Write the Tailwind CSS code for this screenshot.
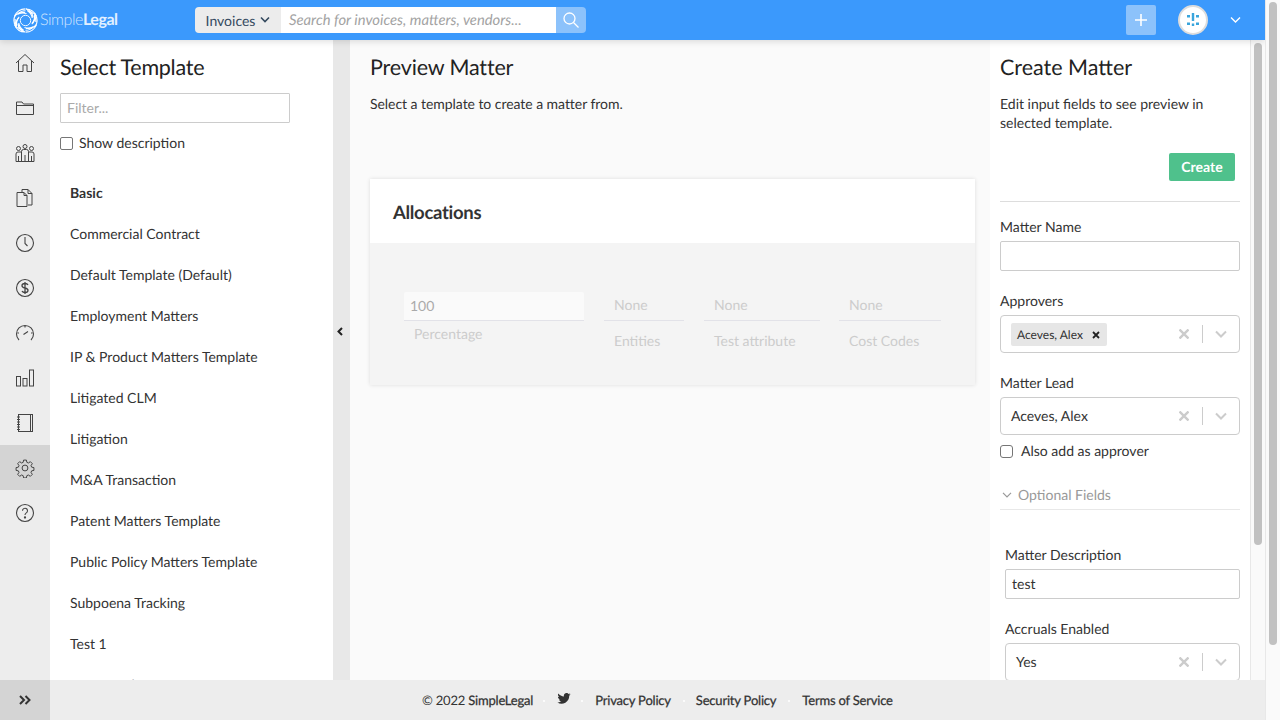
<!DOCTYPE html>
<html>
<head>
  <meta charset="UTF-8">
  <title>SimpleLegal</title>
  <script src="https://cdn.jsdelivr.net/npm/@tailwindcss/browser@4"></script>
</head>
<body class="h-[720px] w-[1280px] overflow-hidden bg-white font-['Lato','Liberation_Sans',sans-serif] text-[14px] text-[#333] [text-rendering:geometricPrecision]">
  <!-- top bar -->
  <header class="relative z-10 flex h-[40px] w-[1265px] items-center bg-[#3b99fc] shadow-[0_2px_6px_rgba(0,0,0,0.12)]">
    <div class="flex w-[195px] items-center pl-[13px]">
      <svg class="h-[25px] w-[25px]" viewBox="0 0 24 24" fill="none" stroke="#fff" stroke-width="1.1">
        <path d="M12 .8C7 .8 3 4 1.500 8c3-3.500 7-4 10-3.500"/>
        <path d="M12 2.600c-3.500 0-6 1.600-7.500 3.400 3-1.400 6-1.500 8.500-.7"/>
        <path d="M22.500 8c-1.500-3.500-5-7-10-7 4 1.500 6.500 5 6.700 8"/>
        <path d="M19.800 5.500c-1.700-1.600-3.800-2.700-6-2.800 2.600 1.500 4.200 4 4.700 6.800"/>
        <path d="M21.700 17.500c2-4 1.500-9-1-12.500 1 4.500-.5 8.500-2.700 10.500"/>
        <path d="M22 13.500c.2-2.400-.3-4.700-1.500-6.500.4 3-.5 6-2.200 7.500"/>
        <path d="M12 23.200c5 0 9-3.200 10.500-7.200-3 3.500-7 4-10 3.500"/>
        <path d="M12 21.400c3.500 0 6-1.600 7.500-3.400-3 1.400-6 1.500-8.500.7"/>
        <path d="M1.500 16c1.500 3.500 5 7 10 7-4-1.500-6.500-5-6.700-8"/>
        <path d="M4.200 18.500c1.700 1.600 3.800 2.700 6 2.800-2.600-1.500-4.200-4-4.700-6.800"/>
        <path d="M2.300 6.500c-2 4-1.500 9 1 12.500-1-4.500.5-8.500 2.700-10.500"/>
        <path d="M2 10.500c-.2 2.400.3 4.700 1.500 6.500-.4-3 .5-6 2.200-7.500"/>
        <circle cx="12" cy="12" r="5" stroke-width=".9"/>
      </svg>
      <span class="ml-[2px] text-[16px] leading-none font-light tracking-[-0.45px] text-white/75">Simple<span class="font-bold text-white/85">Legal</span></span>
    </div>
    <div class="flex h-[26px] w-[391px] items-stretch">
      <div class="flex w-[86px] items-center justify-center gap-[5px] rounded-l-[4px] bg-[#ececec] text-[14px] text-[#34495e]">
        Invoices
        <svg class="h-[8px] w-[10px]" viewBox="0 0 10 8" fill="none" stroke="#34495e" stroke-width="1.6"><path d="M1 1.500l4 4 4-4"/></svg>
      </div>
      <div class="flex w-[275px] items-center bg-white pl-[8px] text-[14.800px] italic text-[#a3a3a3]">Search for invoices, matters, vendors...</div>
      <div class="flex w-[30px] items-center justify-center rounded-r-[4px] bg-[#8cc2fb]">
        <svg class="h-[18px] w-[18px]" viewBox="0 0 18 18" fill="none" stroke="#fff" stroke-width="1.3"><circle cx="7.500" cy="7.500" r="5.500"/><path d="M11.500 11.500l5 5"/></svg>
      </div>
    </div>
    <div class="ml-auto flex items-center">
      <div class="flex h-[30px] w-[30px] items-center justify-center rounded-[2px] bg-[#8cc2fb]">
        <svg class="h-[14px] w-[14px]" viewBox="0 0 14 14" stroke="#fff" stroke-width="1.600"><path d="M7 1v12M1 7h12"/></svg>
      </div>
      <div class="ml-[22px] flex h-[30px] w-[30px] items-center justify-center rounded-full border-2 border-[#ddd] bg-white">
        <svg class="h-[16px] w-[16px]" viewBox="0 0 16 16" fill="#3aa5dc"><rect x="6.800" y="1" width="2.400" height="8"/><rect x="2" y="3" width="3" height="2.500"/><rect x="11" y="3" width="3" height="2.500"/><rect x="2" y="10.500" width="3" height="2.500"/><rect x="11" y="10.500" width="3" height="2.500"/><rect x="6.800" y="11.500" width="2.400" height="2.500"/></svg>
      </div>
      <svg class="ml-[22px] mr-[24px] h-[8px] w-[11px]" viewBox="0 0 11 8" fill="none" stroke="#fff" stroke-width="1.400"><path d="M1 1.500l4.500 4.500 4.500-4.500"/></svg>
    </div>
  </header>

  <!-- outer scrollbar -->
  <div class="absolute right-0 top-0 z-20 h-[720px] w-[15px] border-l border-[#e8e8e8] bg-[#fafafa]">
    <div class="ml-[3px] mt-[2px] h-[643px] w-[8px] rounded-full bg-[#c1c1c1]"></div>
  </div>

  <div class="flex h-[640px] w-[1265px]">
    <!-- left rail -->
    <nav class="flex w-[50px] flex-none flex-col bg-[#ededed]">
      <div class="flex h-[45px] items-center justify-center">
        <svg class="h-[20px] w-[20px]" viewBox="0 0 20 20" fill="none" stroke="#444" stroke-width="1"><path d="M1 10l9-8.500 9 8.500M3.500 8v10.500h4.500v-6.500h4v6.500h4.500V8"/></svg>
      </div>
      <div class="flex h-[45px] items-center justify-center">
        <svg class="h-[20px] w-[20px]" viewBox="0 0 20 20" fill="none" stroke="#444" stroke-width="1"><path d="M1.500 4h5.500l1.500 2h10v10.500h-17zM1.500 7.500h17"/></svg>
      </div>
      <div class="flex h-[45px] items-center justify-center">
        <svg class="h-[20px] w-[20px]" viewBox="0 0 20 20" fill="none" stroke="#444" stroke-width="1"><circle cx="3.500" cy="5.500" r="2"/><circle cx="10" cy="3.500" r="2"/><circle cx="16.500" cy="5.500" r="2"/><path d="M6.500 18.500v-10a2 2 0 0 1 2-2h3a2 2 0 0 1 2 2v10M6.500 9h-3.500a2 2 0 0 0-2 2v7.500h18V11a2 2 0 0 0-2-2h-3.500M10 12v6.500M3.500 13v5.500M16.500 13v5.500"/></svg>
      </div>
      <div class="flex h-[45px] items-center justify-center">
        <svg class="h-[20px] w-[20px]" viewBox="0 0 20 20" fill="none" stroke="#444" stroke-width="1"><path d="M7 4.500V1.500h6l4 4v11.500h-4M13 1.500v4h4M2 4.500h7l3 3v11h-10zM9 4.500v3h3"/></svg>
      </div>
      <div class="flex h-[45px] items-center justify-center">
        <svg class="h-[20px] w-[20px]" viewBox="0 0 20 20" fill="none" stroke="#444" stroke-width="1.100"><circle cx="10" cy="10" r="8.500"/><path d="M10 4v6.500l2.500 2.500"/></svg>
      </div>
      <div class="flex h-[45px] items-center justify-center">
        <svg class="h-[20px] w-[20px]" viewBox="0 0 20 20" fill="none" stroke="#444" stroke-width="1.100"><circle cx="10" cy="10" r="8.500"/><path d="M13 7c-.5-1-1.500-1.500-3-1.500-2 0-3 1-3 2.200 0 3 6 1.600 6 4.600 0 1.200-1 2.200-3 2.200-1.500 0-2.500-.5-3-1.500M10 4v12" stroke-width="1.300"/></svg>
      </div>
      <div class="flex h-[45px] items-center justify-center">
        <svg class="h-[20px] w-[20px]" viewBox="0 0 20 20" fill="none" stroke="#444" stroke-width="1.100"><path d="M4 17a8.500 8.500 0 1 1 12 0M10 3v1.500M2.500 10H4M16 10h1.500M8.500 11.500l4.500-3"/></svg>
      </div>
      <div class="flex h-[45px] items-center justify-center">
        <svg class="h-[20px] w-[20px]" viewBox="0 0 20 20" fill="none" stroke="#444" stroke-width="1"><rect x="1.500" y="8.500" width="4" height="9.500"/><rect x="8" y="10.500" width="4" height="7.500"/><rect x="14.500" y="2" width="4" height="16"/></svg>
      </div>
      <div class="flex h-[45px] items-center justify-center">
        <svg class="h-[20px] w-[20px]" viewBox="0 0 20 20" fill="none" stroke="#444" stroke-width="1"><rect x="3.500" y="1.500" width="14" height="17"/><path d="M15.500 1.500v17M2 4h3M2 6.500h3M2 9h3M2 11.500h3M2 14h3M2 16.500h3"/></svg>
      </div>
      <div class="flex h-[45px] w-[50px] items-center justify-center bg-[#d4d4d4]">
        <svg class="h-[20px] w-[20px]" viewBox="0 0 24 24" fill="none" stroke="#444" stroke-width="1.200"><path d="M10.300 2.500h3.400l.5 2.700 1.900.8 2.300-1.600 2.400 2.400-1.600 2.300.8 1.900 2.700.5v3.400l-2.700.5-.8 1.900 1.600 2.300-2.400 2.400-2.300-1.600-1.900.8-.5 2.700h-3.400l-.5-2.700-1.900-.8-2.300 1.600-2.400-2.400 1.600-2.300-.8-1.900-2.700-.5v-3.400l2.700-.5.8-1.900-1.600-2.300 2.400-2.400 2.300 1.600 1.900-.8z"/><circle cx="12" cy="12" r="3.500"/></svg>
      </div>
      <div class="flex h-[45px] items-center justify-center">
        <svg class="h-[20px] w-[20px]" viewBox="0 0 20 20" fill="none" stroke="#444" stroke-width="1.100"><circle cx="10" cy="10" r="8.500"/><path d="M7.500 7.800a2.500 2.500 0 1 1 3.800 2.100c-.9.600-1.300 1-1.300 2.100"/><circle cx="10" cy="14.500" r=".6" fill="#444"/></svg>
      </div>
    </nav>

    <!-- template list -->
    <aside class="h-[640px] w-[283px] flex-none overflow-hidden bg-white pl-[10px]">
      <h2 class="mt-[14px] text-[21.500px] leading-[27px] tracking-[-0.25px] text-[#222]">Select Template</h2>
      <input class="mt-[12px] block h-[30px] w-[230px] rounded-[1px] border border-[#ccc] px-[6px] pb-[2px] text-[14px] placeholder:text-[#aaa]" placeholder="Filter...">
      <label class="mt-[11px] flex items-center text-[14px] leading-[18px]"><span class="h-[13px] w-[13px] rounded-[2px] border border-[#767676] bg-white"></span><span class="ml-[6px]">Show description</span></label>
      <ul class="mt-[20px] pl-[10px] leading-[41px]">
        <li class="font-bold">Basic</li>
        <li>Commercial Contract</li>
        <li>Default Template (Default)</li>
        <li>Employment Matters</li>
        <li>IP &amp; Product Matters Template</li>
        <li>Litigated CLM</li>
        <li>Litigation</li>
        <li>M&amp;A Transaction</li>
        <li>Patent Matters Template</li>
        <li>Public Policy Matters Template</li>
        <li>Subpoena Tracking</li>
        <li>Test 1</li>
        <li>Test Template</li>
      </ul>
    </aside>

    <!-- collapse strip -->
    <div class="flex w-[17px] flex-none items-center justify-center bg-[#e8e8e8] pb-[58px]">
      <svg class="-ml-[3px] h-[9px] w-[6px]" viewBox="0 0 6 9" fill="none" stroke="#222" stroke-width="2"><path d="M5 1l-3.500 3.500 3.500 3.500"/></svg>
    </div>

    <!-- preview -->
    <main class="w-[640px] flex-none bg-[#fafafa] pl-[20px]">
      <h2 class="mt-[14px] text-[21.500px] leading-[27px] tracking-[-0.15px] text-[#222]">Preview Matter</h2>
      <p class="mt-[13px] leading-[20px] tracking-[-0.05px]">Select a template to create a matter from.</p>
      <section class="mt-[65px] w-[605px] shadow-[0_0_4px_rgba(0,0,0,0.12)]">
        <div class="flex h-[64px] items-center bg-white pl-[23px] pt-[4px] text-[18.500px] font-bold tracking-[-0.3px] text-[#333]">Allocations</div>
        <div class="flex h-[142px] items-start bg-[#f4f4f4] pl-[34px] pt-[49px] text-[14px] text-[#ccc]">
          <div class="w-[180px]">
            <div class="flex h-[29px] items-center rounded-t-[2px] border-b border-[#e2e2e8] bg-[#fafafa] pb-[2px] pl-[6px] text-[#aaa]">100</div>
            <div class="mt-[3px] pl-[10px] leading-[20px]">Percentage</div>
          </div>
          <div class="ml-[20px] w-[80px]">
            <div class="flex h-[29px] items-center border-b border-[#e2e2e8] pb-[3px] pl-[10px]">None</div>
            <div class="mt-[10px] pl-[10px] leading-[20px]">Entities</div>
          </div>
          <div class="ml-[20px] w-[116px]">
            <div class="flex h-[29px] items-center border-b border-[#e2e2e8] pb-[3px] pl-[10px]">None</div>
            <div class="mt-[10px] pl-[10px] leading-[20px]">Test attribute</div>
          </div>
          <div class="ml-[19px] w-[102px]">
            <div class="flex h-[29px] items-center border-b border-[#e2e2e8] pb-[3px] pl-[10px]">None</div>
            <div class="mt-[10px] pl-[10px] leading-[20px]">Cost Codes</div>
          </div>
        </div>
      </section>
    </main>

    <!-- create form -->
    <aside class="h-[640px] w-[260px] flex-none overflow-hidden bg-white pl-[10px] pr-[10px]">
      <h2 class="mt-[14px] text-[21.500px] leading-[27px] text-[#222]">Create Matter</h2>
      <p class="mt-[13px] leading-[19px]">Edit input fields to see preview in selected template.</p>
      <div class="mt-[21px] flex justify-end pr-[5px]">
        <div class="flex h-[28px] w-[66px] items-center justify-center rounded-[2px] bg-[#4fc18c] pb-[2px] text-[14px] font-bold text-white">Create</div>
      </div>
      <div class="mt-[20px] h-px bg-[#ddd]"></div>
      <label class="mt-[16px] block leading-[18px]">Matter Name</label>
      <div class="mt-[5px] h-[30px] rounded-[2px] border border-[#ccc]"></div>
      <label class="mt-[21px] block leading-[18px]">Approvers</label>
      <div class="mt-[5px] flex h-[38px] items-center rounded-[4px] border border-[#ccc] pl-[10px]">
        <span class="flex h-[23px] w-[96px] items-center justify-between rounded-[2px] bg-[#e6e6e6] pl-[6px] pr-[7px] pt-px text-[12px]">Aceves, Alex
          <svg class="h-[8px] w-[8px]" viewBox="0 0 8 8" stroke="#222" stroke-width="1.800"><path d="M1 1l6 6M7 1l-6 6"/></svg>
        </span>
        <svg class="ml-auto h-[10px] w-[10px]" viewBox="0 0 10 10" stroke="#ccc" stroke-width="2.400"><path d="M.5.500l9 9M9.500.500l-9 9"/></svg>
        <span class="ml-[13px] h-[18px] w-px bg-[#ccc]"></span>
        <svg class="ml-[12px] mr-[12px] h-[8px] w-[12px]" viewBox="0 0 12 8" fill="none" stroke="#ccc" stroke-width="2"><path d="M1 1.500l5 5 5-5"/></svg>
      </div>
      <label class="mt-[21px] block leading-[18px]">Matter Lead</label>
      <div class="mt-[5px] flex h-[38px] items-center rounded-[4px] border border-[#ccc] pl-[10px]">
        <span class="mb-[2px]">Aceves, Alex</span>
        <svg class="ml-auto h-[10px] w-[10px]" viewBox="0 0 10 10" stroke="#ccc" stroke-width="2.400"><path d="M.5.500l9 9M9.500.500l-9 9"/></svg>
        <span class="ml-[13px] h-[18px] w-px bg-[#ccc]"></span>
        <svg class="ml-[12px] mr-[12px] h-[8px] w-[12px]" viewBox="0 0 12 8" fill="none" stroke="#ccc" stroke-width="2"><path d="M1 1.500l5 5 5-5"/></svg>
      </div>
      <label class="mt-[7px] flex items-center leading-[18px]"><span class="h-[13px] w-[13px] rounded-[3px] border border-[#767676] bg-white"></span><span class="ml-[8px]">Also add as approver</span></label>
      <div class="mt-[26px] flex h-[24px] items-start border-b border-[#e8e8e8] leading-[18px] text-[#999]">
        <svg class="ml-[2px] mr-[6px] mt-[6px] h-[6px] w-[10px]" viewBox="0 0 10 6" fill="none" stroke="#999" stroke-width="1.200"><path d="M1 .8l4 4 4-4"/></svg>
        Optional Fields
      </div>
      <div class="pl-[5px]">
        <label class="mt-[36px] block leading-[18px]">Matter Description</label>
        <div class="mt-[5px] flex h-[30px] items-center rounded-[2px] border border-[#ccc] pb-[2px] pl-[6px]">test</div>
        <label class="mt-[21px] block leading-[18px]">Accruals Enabled</label>
        <div class="mt-[5px] flex h-[38px] items-center rounded-[4px] border border-[#ccc] pl-[10px]">
          <span class="mb-[2px]">Yes</span>
          <svg class="ml-auto h-[10px] w-[10px]" viewBox="0 0 10 10" stroke="#ccc" stroke-width="2.400"><path d="M.5.500l9 9M9.500.500l-9 9"/></svg>
          <span class="ml-[13px] h-[18px] w-px bg-[#ccc]"></span>
          <svg class="ml-[12px] mr-[12px] h-[8px] w-[12px]" viewBox="0 0 12 8" fill="none" stroke="#ccc" stroke-width="2"><path d="M1 1.500l5 5 5-5"/></svg>
        </div>
      </div>
    </aside>

    <!-- inner scrollbar -->
    <div class="w-[15px] flex-none border-l border-[#e8e8e8] bg-[#fafafa]">
      <div class="ml-[3px] mt-[3px] h-[502px] w-[8px] rounded-full bg-[#c1c1c1]"></div>
    </div>
  </div>

  <!-- footer -->
  <footer class="flex h-[40px] w-[1265px] items-center bg-[#ededed] text-[13px] text-[#333]">
    <div class="flex h-[40px] w-[50px] items-center justify-center bg-[#d4d4d4]">
      <svg class="h-[10px] w-[12px]" viewBox="0 0 12 10" fill="none" stroke="#333" stroke-width="2"><path d="M1 1l4 4-4 4M6.500 1l4 4-4 4"/></svg>
    </div>
    <div class="ml-[372px] flex items-center pt-[2px] tracking-[-0.2px] [-webkit-text-stroke:0.25px_#333]">
      <span><span class="[-webkit-text-stroke:0]">© 2022</span> SimpleLegal</span>
      <span class="ml-[10px] h-[2px] w-[2px] rounded-full bg-white"></span>
      <svg class="mb-[5px] ml-[12px] h-[11px] w-[14px]" viewBox="0 0 24 20" fill="#333"><path d="M24 2.400c-.9.400-1.800.7-2.800.8 1-.6 1.800-1.600 2.200-2.700-1 .6-2 1-3.100 1.200A4.900 4.900 0 0 0 11.900 6.200C7.800 6 4.200 4 1.700.9c-1.300 2.200-.6 5 1.500 6.500-.8 0-1.600-.2-2.200-.6 0 2.300 1.600 4.400 3.900 4.900-.7.200-1.500.2-2.200.1.600 2 2.400 3.400 4.600 3.400A9.900 9.900 0 0 1 0 17.200 14 14 0 0 0 21.500 4.800c1-.7 1.800-1.500 2.500-2.400z"/></svg>
      <span class="ml-[10px] h-[2px] w-[2px] rounded-full bg-white"></span>
      <span class="ml-[12px]">Privacy Policy</span>
      <span class="ml-[12px] h-[2px] w-[2px] rounded-full bg-white"></span>
      <span class="ml-[11px]">Security Policy</span>
      <span class="ml-[12px] h-[2px] w-[2px] rounded-full bg-white"></span>
      <span class="ml-[12px]">Terms of Service</span>
    </div>
  </footer>
</body>
</html>
